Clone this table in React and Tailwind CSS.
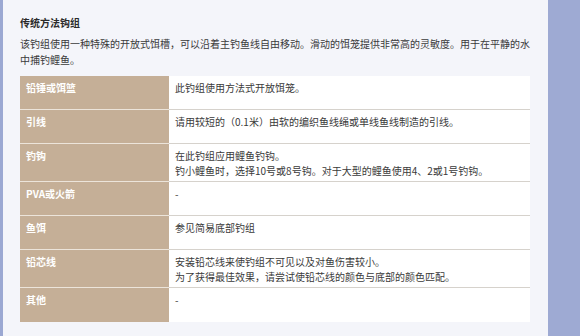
const rows = [
  { label: '铅锤或饵篮', lines: ['此钓组使用方法式开放饵笼。'] },
  { label: '引线', lines: ['请用较短的（0.1米）由软的编织鱼线绳或单线鱼线制造的引线。'] },
  { label: '钓钩', lines: ['在此钓组应用鲤鱼钓钩。', '钓小鲤鱼时，选择10号或8号钩。对于大型的鲤鱼使用4、2或1号钓钩。'] },
  { label: 'PVA或火箭', lines: ['-'] },
  { label: '鱼饵', lines: ['参见简易底部钓组'] },
  { label: '铅芯线', lines: ['安装铅芯线来使钓组不可见以及对鱼伤害较小。', '为了获得最佳效果，请尝试使铅芯线的颜色与底部的颜色匹配。'] },
  { label: '其他', lines: ['-'] },
]

const font = { fontFamily: '"Noto Sans CJK SC", "Noto Sans", sans-serif' }

export default function App() {
  return (
    <div className="flex h-[336px] w-[580px] overflow-hidden bg-[#f4f5fa]" style={font}>
      <div className="w-[3px] shrink-0 bg-[#9ba8d2]" />
      <main className="flex-1 px-[17px] pt-[15px]">
        <h2 className="text-[10px] font-bold leading-[15px] text-[#2b2b2b]">传统方法钩组</h2>
        <p className="mt-[6px] text-[10px] leading-[15.5px] text-[#3a3a3a]">
          该钓组使用一种特殊的开放式饵槽，可以沿着主钓鱼线自由移动。滑动的饵笼提供非常高的灵敏度。用于在平静的水中捕钓鲤鱼。
        </p>
        <div className="mt-[9px] w-[510px]">
          {rows.map((r, i) => {
            const last = i === rows.length - 1
            return (
              <div key={r.label} className="flex">
                <div
                  className={
                    'w-[149px] shrink-0 bg-[#c5af97] px-[6px] pt-[5px] text-[10px] font-semibold leading-[14.5px] text-white ' +
                    (last ? '' : 'border-b border-[#ece4da]')
                  }
                >
                  {r.label}
                </div>
                <div
                  className={
                    'min-h-[34px] flex-1 bg-white px-[6px] pt-[5px] pb-[3px] text-[10px] leading-[14.5px] text-[#3a3a3a] ' +
                    (last ? '' : 'border-b border-[#d6d2cc]')
                  }
                >
                  {r.lines.map((l) => (
                    <div key={l}>{l}</div>
                  ))}
                </div>
              </div>
            )
          })}
        </div>
      </main>
      <div className="w-[32px] shrink-0 bg-[#9eaad3]" />
    </div>
  )
}
